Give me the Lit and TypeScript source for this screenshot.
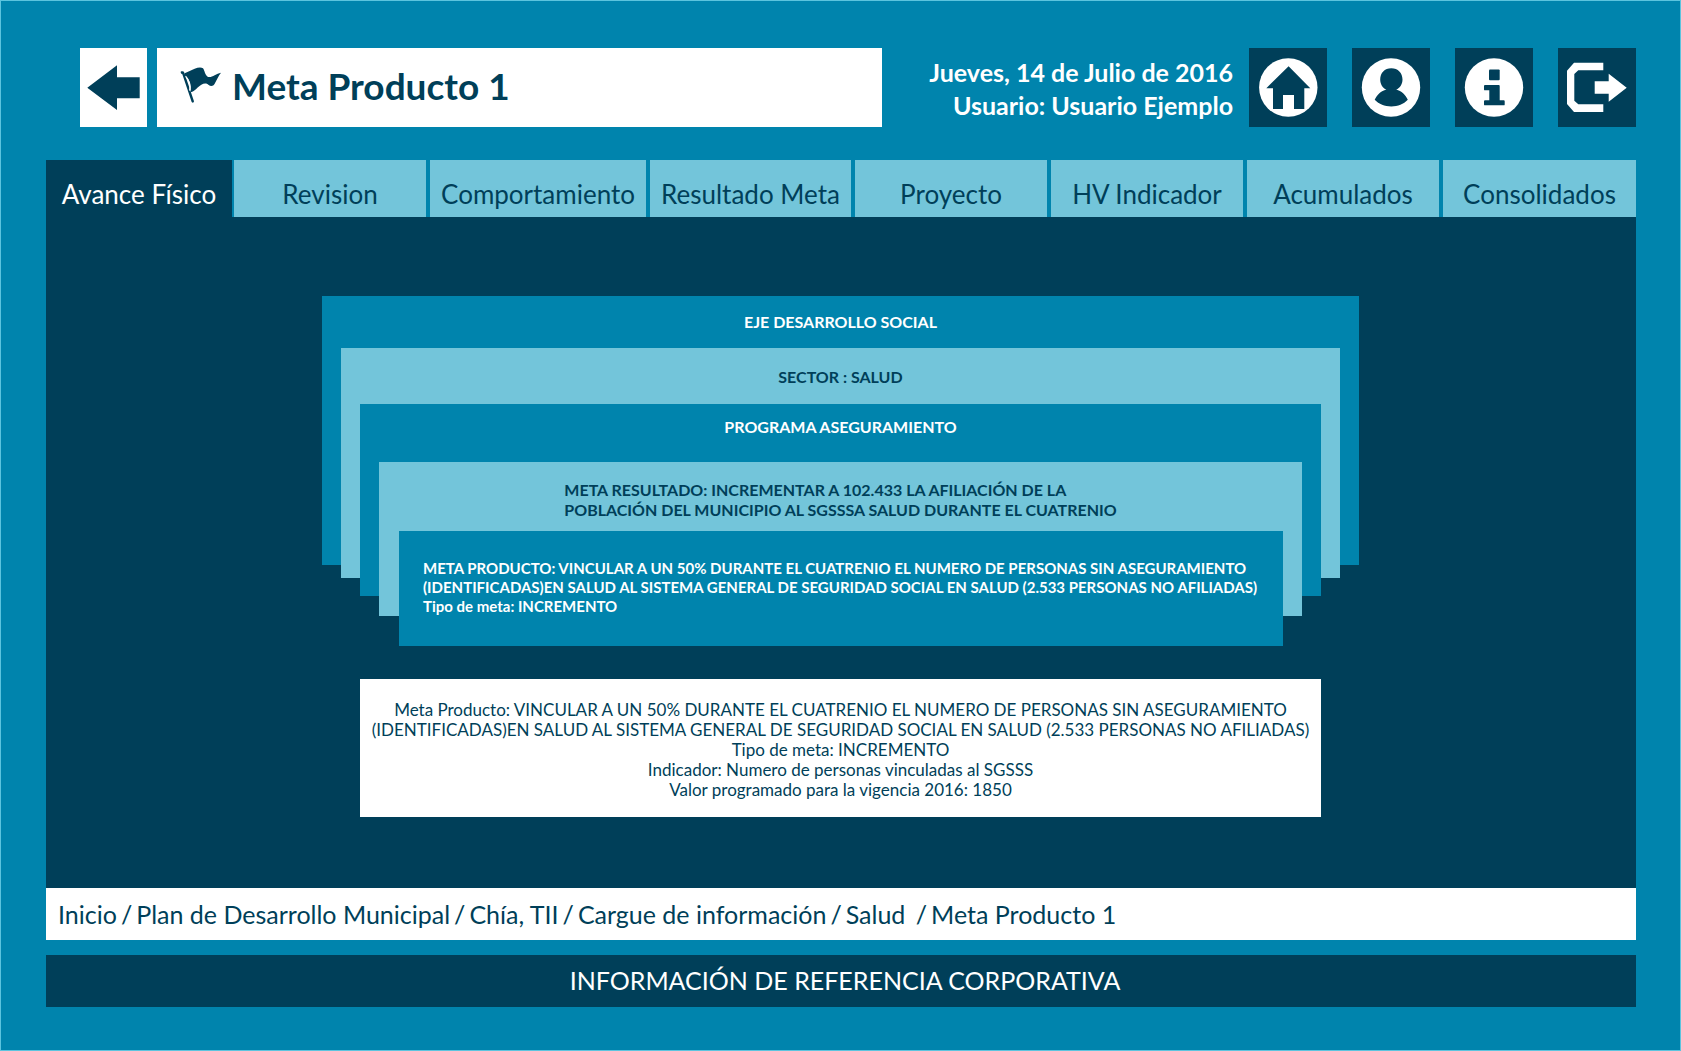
import { LitElement, html, css, svg, TemplateResult } from "lit";
import { customElement, property, state } from "lit/decorators.js";
import { classMap } from "lit/directives/class-map.js";

type IconName = "home" | "user" | "info" | "exit";

const ICONS: Record<IconName, TemplateResult> = {
  home: svg`
    <circle cx="39.3" cy="39.5" r="29.2" fill="#fff"/>
    <path fill="#003f59" d="M39.6 18.3 61.3 40.2H55.3V61H45V47H34V61H24V40.2H17.3Z"/>`,
  user: svg`
    <circle cx="39" cy="39.5" r="29.2" fill="#fff"/>
    <path fill="#003f59" d="M39.3 20.2C46 20.2 50.5 25 50.5 31.4C50.5 36 48 39.8 44.2 41.6C49.5 43 53.5 46.8 55.8 51.8C51.5 56.3 46 58.5 39.3 58.5C32.6 58.5 27 56.3 22.7 51.8C25 46.8 29 43 34.4 41.6C30.6 39.8 28.2 36 28.2 31.4C28.2 25 32.6 20.2 39.3 20.2Z"/>`,
  info: svg`
    <circle cx="39" cy="39.5" r="29.2" fill="#fff"/>
    <rect x="34" y="21.5" width="10.7" height="10.7" rx="1" fill="#003f59"/>
    <path fill="#003f59" d="M30 37H43.8Q44.7 37 44.7 38V52.3H48.8Q49.7 52.3 49.7 53.2V56.4Q49.7 57.3 48.8 57.3H30Q29 57.3 29 56.4V53.2Q29 52.3 30 52.3H34.3V42.3H30Q29 42.3 29 41.4V38Q29 37 30 37Z"/>`,
  exit: svg`
    <path fill="#fff" d="M16 14.8H45.3V22.3H20.3L16.3 26V52.7L20.3 56.3H45.3V64H16L9 56V22.7Z"/>
    <path fill="#fff" d="M36.7 33.3H50.7V25.7L68.7 39.7L50.7 53.7V45.7H36.7Z"/>`,
};

@customElement("icon-button")
class IconButton extends LitElement {
  @property() icon: IconName = "home";
  @property() label = "";

  static styles = css`
    :host {
      display: block;
    }
    .button {
      display: block;
      padding: 0;
      border: 0;
      background: #003f59;
      cursor: pointer;
    }
    .glyph {
      display: block;
      width: 78px;
      height: 79px;
    }
  `;

  render() {
    return html`<button class="button" type="button" aria-label=${this.label}>
      <svg class="glyph" viewBox="0 0 78 79" aria-hidden="true">${ICONS[this.icon]}</svg>
    </button>`;
  }
}

const TABS = [
  "Avance Físico",
  "Revision",
  "Comportamiento",
  "Resultado Meta",
  "Proyecto",
  "HV Indicador",
  "Acumulados",
  "Consolidados",
];

const ACTIONS: { icon: IconName; label: string }[] = [
  { icon: "home", label: "Inicio" },
  { icon: "user", label: "Usuario" },
  { icon: "info", label: "Información" },
  { icon: "exit", label: "Salir" },
];

const TRAIL = [
  "Inicio",
  "Plan de Desarrollo Municipal",
  "Chía, TII",
  "Cargue de información",
  "Salud\u00a0",
  "Meta Producto 1",
];

@customElement("app-root")
class AppRoot extends LitElement {
  @state() private active = 0;

  static styles = css`
    :host {
      --blue: #0084ad;
      --light: #73c5da;
      --dark: #003f59;
      display: block;
      font-family: Lato, "Liberation Sans", sans-serif;
      color: var(--dark);
    }
    .page {
      box-sizing: border-box;
      min-height: 100vh;
      display: flex;
      flex-direction: column;
      padding: 47px 44px 43px 45px;
      border: 1px solid #5cc4de;
      background: var(--blue);
    }
    .header {
      display: flex;
      align-items: stretch;
      padding-left: 34px;
    }
    .back {
      padding: 0;
      border: 0;
      background: #fff;
      cursor: pointer;
    }
    .back-glyph {
      display: block;
      width: 67px;
      height: 79px;
    }
    .title-bar {
      flex: 1;
      display: flex;
      align-items: center;
      gap: 10px;
      margin-left: 10px;
      padding: 0 23px;
      background: #fff;
    }
    .flag {
      width: 42px;
      height: 38px;
      margin-bottom: 6px;
    }
    .title {
      margin: 0 0 3px;
      font-size: 37px;
      line-height: 44px;
      font-weight: 700;
    }
    .session {
      width: 351px;
      padding-top: 8px;
      font-size: 25px;
      line-height: 33px;
      font-weight: 700;
      text-align: right;
      color: #fff;
    }
    .line {
      margin: 0;
    }
    .actions {
      display: flex;
      gap: 25px;
      margin-left: 16px;
    }
    .tabs {
      display: grid;
      grid-template-columns: 184fr 192fr 216fr 201fr 192fr 192fr 192fr 193fr;
      gap: 4px;
      margin-top: 33px;
    }
    .tab {
      min-width: 0;
      height: 57px;
      padding: 10px 0 0;
      border: 0;
      background: var(--light);
      color: var(--dark);
      font-family: inherit;
      font-size: 26px;
      line-height: 32px;
      white-space: nowrap;
      cursor: pointer;
    }
    .selected {
      margin-right: -2px;
      background: var(--dark);
      color: #fff;
    }
    .panel {
      flex: 1;
      display: flex;
      flex-direction: column;
      align-items: center;
      padding: 79px 21px 71px 20px;
      background: var(--dark);
    }
    .stack {
      width: 100%;
      max-width: 1037px;
      padding-bottom: 114px;
    }
    .layer {
      display: flex;
      flex-direction: column;
      font-size: 16px;
      line-height: 20px;
      font-weight: 700;
      text-align: center;
      background: var(--blue);
      color: #fff;
    }
    .pale {
      background: var(--light);
      color: var(--dark);
    }
    .axis-label {
      margin: 0;
      padding: 16px 0;
    }
    .sector {
      margin: 0 19px -13px;
    }
    .sector-label {
      margin: 0;
      padding: 19px 0 17px;
    }
    .program {
      margin: 0 19px -18px;
    }
    .program-label {
      margin: 0;
      padding: 13px 0 25px;
    }
    .result {
      margin: 0 19px -20px;
    }
    .result-label {
      align-self: center;
      margin: 0;
      padding: 18px 0 11px;
      text-align: left;
    }
    .product {
      margin: 0 19px -30px 20px;
      padding: 28px 0 30px 24px;
      font-size: 15px;
      line-height: 19px;
      text-align: left;
    }
    .summary {
      box-sizing: border-box;
      width: 100%;
      max-width: 961px;
      padding: 21px 0 17px;
      background: #fff;
      font-size: 17px;
      line-height: 20px;
      text-align: center;
    }
    .crumbs {
      display: flex;
      flex-wrap: wrap;
      gap: 0 4px;
      padding: 10px 12px;
      background: #fff;
      font-size: 25px;
      line-height: 32px;
    }
    .crumb {
      color: inherit;
      text-decoration: none;
    }
    .footer {
      margin-top: 15px;
      padding: 9px 0 11px 8px;
      background: var(--dark);
      color: #fff;
      font-size: 25px;
      line-height: 32px;
      text-align: center;
    }
  `;

  render() {
    return html`<div class="page">
      <header class="header">
        <button class="back" type="button" aria-label="Volver">
          <svg class="back-glyph" viewBox="0 0 67 79" aria-hidden="true">
            <path fill="#003f59" d="M7.3 39.8 37 17.3V29.3H59.7V50.2H37V62Z"/>
          </svg>
        </button>
        <div class="title-bar">
          <svg class="flag" viewBox="330 79 126 114" aria-hidden="true">
            <g fill="#003f59">
              <path d="M332 98Q332 94 336 95Q341 94 343 99L372 185Q372 189 368 189L365 187L337 104Q332 103 332 98Z"/>
              <path d="M344 101C354 97 364 91 374 87C384 83 394 82 399 86C405 94 404 105 413 111C424 116 437 102 453 99C445 109 441 120 434 132C430 140 422 140 416 136C409 130 402 131 394 135C382 142 376 154 362 158C364 137 358 117 344 107Z"/>
            </g>
            <path d="M347 110C358 122 362 138 359 153" fill="none" stroke="#fff" stroke-width="4"/>
          </svg>
          <h1 class="title">Meta Producto 1</h1>
        </div>
        <div class="session">
          <p class="line">Jueves, 14 de Julio de 2016</p>
          <p class="line">Usuario: Usuario Ejemplo</p>
        </div>
        <div class="actions">
          ${ACTIONS.map((a) => html`<icon-button icon=${a.icon} label=${a.label}></icon-button>`)}
        </div>
      </header>

      <nav class="tabs" role="tablist">
        ${TABS.map(
          (name, i) => html`<button
            type="button"
            role="tab"
            class=${classMap({ tab: true, selected: i === this.active })}
            aria-selected=${i === this.active ? "true" : "false"}
            @click=${() => (this.active = i)}
          >${name}</button>`
        )}
      </nav>

      <main class="panel">
        <div class="stack">
          <section class="layer">
            <p class="axis-label">EJE DESARROLLO SOCIAL</p>
            <section class="layer pale sector">
              <p class="sector-label">SECTOR : SALUD</p>
              <section class="layer program">
                <p class="program-label">PROGRAMA ASEGURAMIENTO</p>
                <section class="layer pale result">
                  <p class="result-label">
                    META RESULTADO: INCREMENTAR A 102.433 LA AFILIACIÓN DE LA<br />
                    POBLACIÓN DEL MUNICIPIO AL SGSSSA SALUD DURANTE EL CUATRENIO
                  </p>
                  <section class="layer product">
                    <p class="line">
                      META PRODUCTO: VINCULAR A UN 50% DURANTE EL CUATRENIO EL NUMERO DE PERSONAS SIN ASEGURAMIENTO<br />
                      (IDENTIFICADAS)EN SALUD AL SISTEMA GENERAL DE SEGURIDAD SOCIAL EN SALUD (2.533 PERSONAS NO AFILIADAS)
                    </p>
                    <p class="line">Tipo de meta: INCREMENTO</p>
                  </section>
                </section>
              </section>
            </section>
          </section>
        </div>
        <section class="summary">
          <p class="line">
            Meta Producto: VINCULAR A UN 50% DURANTE EL CUATRENIO EL NUMERO DE PERSONAS SIN ASEGURAMIENTO<br />
            (IDENTIFICADAS)EN SALUD AL SISTEMA GENERAL DE SEGURIDAD SOCIAL EN SALUD (2.533 PERSONAS NO AFILIADAS)
          </p>
          <p class="line">Tipo de meta: INCREMENTO</p>
          <p class="line">Indicador: Numero de personas vinculadas al SGSSS</p>
          <p class="line">Valor programado para la vigencia 2016: 1850</p>
        </section>
      </main>

      <nav class="crumbs" aria-label="Ruta">
        ${TRAIL.map((name, i) => html`${i ? html`<span>/</span>` : ""}<a class="crumb" href="#">${name}</a>`)}
      </nav>
      <footer class="footer">INFORMACIÓN DE REFERENCIA CORPORATIVA</footer>
    </div>`;
  }
}
